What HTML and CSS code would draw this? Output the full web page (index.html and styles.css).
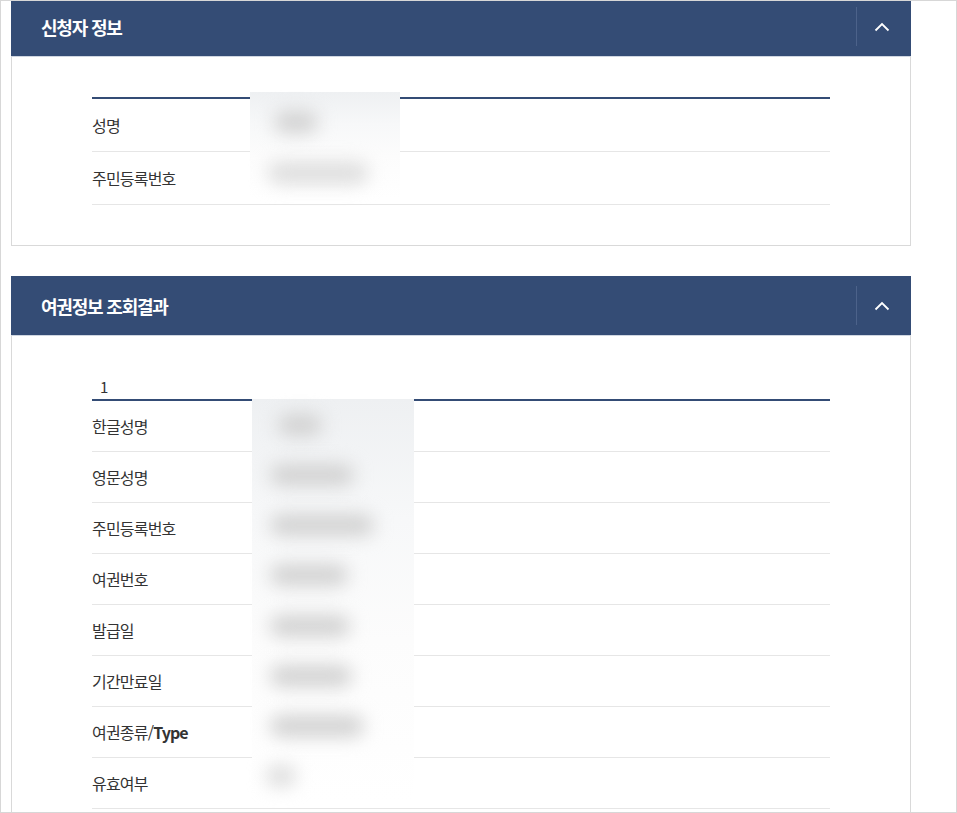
FILE: index.html
```html
<!DOCTYPE html>
<html lang="ko">
<head>
<meta charset="utf-8">
<title>신청자 정보</title>
<link rel="stylesheet" href="styles.css">
</head>
<body>
<div class="frame">
  <section class="panel panel-first">
    <header class="panel-head">
      <h2 class="panel-title">신청자 정보</h2>
      <button class="toggle" type="button" aria-label="접기">
        <svg width="16" height="10" viewBox="0 0 16 10"><path d="M1.5 8.5 L8 2 L14.5 8.5" fill="none" stroke="#fff" stroke-width="1.8"/></svg>
      </button>
    </header>
    <div class="panel-body">
      <div class="tbl tbl-tall">
        <div class="row"><span class="label">성명</span></div>
        <div class="row"><span class="label">주민등록번호</span></div>
        <div class="mask mask-a">
          <div class="mrow tall"><span class="blob" style="width:44px;margin-left:24px"></span></div>
          <div class="mrow tall"><span class="blob faint" style="width:100px;margin-left:18px"></span></div>
        </div>
      </div>
    </div>
  </section>

  <section class="panel">
    <header class="panel-head">
      <h2 class="panel-title">여권정보 조회결과</h2>
      <button class="toggle" type="button" aria-label="접기">
        <svg width="16" height="10" viewBox="0 0 16 10"><path d="M1.5 8.5 L8 2 L14.5 8.5" fill="none" stroke="#fff" stroke-width="1.8"/></svg>
      </button>
    </header>
    <div class="panel-body">
      <div class="caption">1</div>
      <div class="tbl">
        <div class="row"><span class="label">한글성명</span></div>
        <div class="row"><span class="label">영문성명</span></div>
        <div class="row"><span class="label">주민등록번호</span></div>
        <div class="row"><span class="label">여권번호</span></div>
        <div class="row"><span class="label">발급일</span></div>
        <div class="row"><span class="label">기간만료일</span></div>
        <div class="row"><span class="label">여권종류/<b>Type</b></span></div>
        <div class="row"><span class="label">유효여부</span></div>
        <div class="mask mask-b">
          <div class="mrow"><span class="blob" style="width:44px;margin-left:26px"></span></div>
          <div class="mrow"><span class="blob" style="width:84px;margin-left:18px"></span></div>
          <div class="mrow"><span class="blob" style="width:104px;margin-left:18px"></span></div>
          <div class="mrow"><span class="blob" style="width:78px;margin-left:18px"></span></div>
          <div class="mrow"><span class="blob" style="width:80px;margin-left:18px"></span></div>
          <div class="mrow"><span class="blob" style="width:82px;margin-left:18px"></span></div>
          <div class="mrow"><span class="blob" style="width:94px;margin-left:18px"></span></div>
          <div class="mrow"><span class="blob faint" style="width:30px;margin-left:14px"></span></div>
        </div>
      </div>
    </div>
  </section>
</div>
</body>
</html>
```

FILE: styles.css
```css
* { box-sizing: border-box; }
html, body { margin: 0; padding: 0; background: #fff; }
body {
  font-family: "Noto Sans CJK KR", "Noto Sans", sans-serif;
  color: #333;
}
.frame {
  width: 957px;
  height: 813px;
  border: 1px solid #d7d7d7;
  overflow: hidden;
  padding: 0 45px 0 10px;
}
.panel { width: 900px; margin-top: 30px; }
.panel-first { margin-top: -4px; }
.panel-head {
  height: 59px;
  background: #344c75;
  display: flex;
  align-items: center;
  padding-left: 30px;
}
.panel-title {
  flex: 1;
  margin: 0;
  color: #fff;
  font-size: 18px;
  font-weight: 700;
  letter-spacing: -1.2px;
  line-height: 1;
}
.toggle {
  width: 55px;
  height: 39px;
  border: 0;
  border-left: 1px solid #4c628a;
  background: transparent;
  padding: 0;
  display: flex;
  align-items: center;
  justify-content: center;
}
.toggle svg { display: block; margin-left: -4px; }
.panel-body {
  border: 1px solid #d9d9d9;
  border-top-color: #cfd6e1;
  padding: 40px 80px;
}
.caption {
  height: 23px;
  padding-left: 8px;
  font-size: 15px;
  line-height: 22px;
  color: #333;
}
.tbl {
  position: relative;
  border-top: 2px solid #344c75;
}
.row {
  height: 51px;
  border-bottom: 1px solid #e6e6e6;
  display: flex;
  align-items: center;
}
.tbl-tall .row { height: 53px; }
.label {
  font-size: 16px;
  letter-spacing: -0.8px;
  color: #333;
}
.label b { font-weight: 700; letter-spacing: -1px; }
.mask {
  position: absolute;
  display: flex;
  flex-direction: column;
  background: linear-gradient(#eef0f2, #f7f8f9 30%, #fcfcfc 60%, #fff);
}
.mask-a { left: 158px; top: -7px; width: 150px; height: 107px; padding-top: 4px; }
.mask-b { left: 160px; top: -2px; width: 162px; height: 402px; padding-top: 1px; }
.mrow { height: 51px; display: flex; align-items: center; }
.mrow.tall { height: 52px; }
.blob {
  display: block;
  height: 22px;
  border-radius: 12px;
  background: #d2d2d2;
  filter: blur(9px);
}
.blob.faint { background: #dddddd; }
```
